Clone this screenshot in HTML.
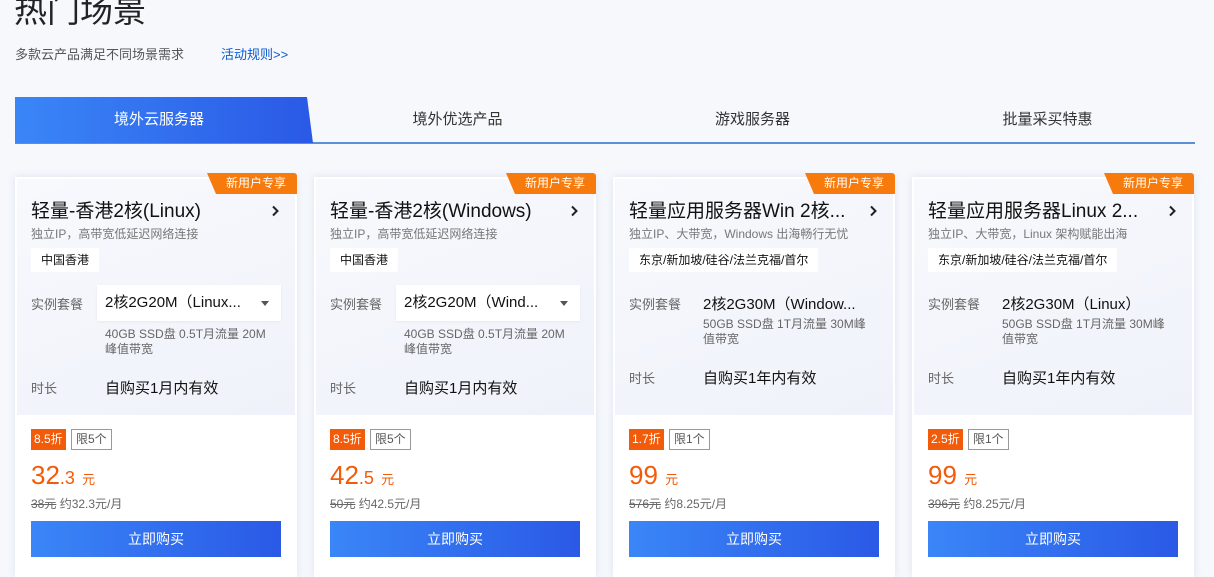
<!DOCTYPE html>
<html><head><meta charset="utf-8"><style>
*{margin:0;padding:0;box-sizing:border-box}
body{width:1214px;height:569px;overflow:hidden;background:#f6f8fc;font-family:"Liberation Sans","Noto Sans CJK SC",sans-serif;position:relative;color:#222}
.abs{position:absolute}
.h1{left:14px;top:-11px;font-size:33px;color:#222;line-height:44px}
.sub{left:15px;top:44px;font-size:13px;color:#555}
.link{left:221px;top:44px;font-size:13px;color:#0a5bd1}
.tabline{left:15px;top:142px;width:1180px;height:2px;background:#5b8fd6}
.tab1{left:15px;top:97px;width:298px;height:46px;background:linear-gradient(90deg,#3a86f7,#2a59e6);clip-path:polygon(0 0,292px 0,298px 46px,0 46px);color:#fff;font-size:15px;line-height:46px;text-align:center;padding-right:10px}
.tab{top:97px;height:46px;line-height:46px;font-size:15px;color:#333;width:295px;text-align:center}
.card{top:177px;width:282px;height:400px;background:#fff;box-shadow:0 0 8px rgba(180,190,215,.35)}
.top{position:absolute;left:0;top:0;width:282px;height:240px;background:linear-gradient(160deg,#f8f9fd 0%,#eff2fa 100%);border:2px solid #fff}
.new{position:absolute;right:0;top:-4px;width:90px;height:21px;background:#f77a0c;color:#fff;font-size:12px;line-height:21px;text-align:center;padding-left:8px;clip-path:polygon(0 0,100% 0,100% 100%,9px 100%);border-radius:0 3px 0 0}
.t{position:absolute;left:16px;top:19px;font-size:19px;color:#111;white-space:nowrap}
.arr{position:absolute;left:256px;top:28px}
.d{position:absolute;left:16px;top:48px;font-size:12px;color:#777;white-space:nowrap}
.reg{position:absolute;left:16px;top:71px;height:24px;background:#fff;font-size:12px;line-height:24px;padding:0 10px;color:#111}
.lb{position:absolute;left:16px;font-size:13px;color:#666}
.sel{position:absolute;left:82px;top:108px;width:184px;height:36px;background:#fff;font-size:15px;line-height:36px;padding-left:8px;color:#111;box-shadow:0 1px 3px rgba(0,0,0,.05)}
.sel:after{content:"";position:absolute;right:12px;top:16px;border:4px solid transparent;border-top:5px solid #555}
.v{position:absolute;left:90px;font-size:15px;color:#111;white-space:nowrap}
.sd{position:absolute;left:90px;font-size:12px;color:#666;line-height:15px;width:168px}
.b1{position:absolute;left:16px;top:252px;height:21px;background:#f25b0a;color:#fff;font-size:12px;line-height:21px;padding:0 3px}
.b2{position:absolute;top:252px;height:21px;border:1px solid #999;color:#555;font-size:12px;line-height:19px;padding:0 4px;background:#fff}
.p{position:absolute;left:16px;top:283px;color:#f25b0a;font-size:26px;white-space:nowrap}
.p small{font-size:18px}.p i{font-style:normal;font-size:13px}
.o{position:absolute;left:16px;top:318px;font-size:12px;color:#666}
.btn{position:absolute;left:16px;top:344px;width:250px;height:36px;background:linear-gradient(90deg,#3a86f7,#2a59e6);color:#fff;font-size:14px;line-height:36px;text-align:center}
</style></head><body>
<div class="abs h1">热门场景</div>
<div class="abs sub">多款云产品满足不同场景需求</div>
<div class="abs link">活动规则&gt;&gt;</div>
<div class="abs tabline"></div>
<div class="abs tab1">境外云服务器</div>
<div class="abs tab" style="left:310px">境外优选产品</div>
<div class="abs tab" style="left:605px">游戏服务器</div>
<div class="abs tab" style="left:900px">批量采买特惠</div>

<div class="abs card" style="left:15px"><div class="top"></div><div class="new">新用户专享</div>
<div class="t">轻量-香港2核(Linux)</div><svg class="arr" width="8" height="12" viewBox="0 0 8 12"><path d="M2 1.5L6.5 6L2 10.5" fill="none" stroke="#222" stroke-width="2"/></svg>
<div class="d">独立IP，高带宽低延迟网络连接</div><div class="reg">中国香港</div>
<div class="lb" style="top:117px">实例套餐</div><div class="sel">2核2G20M（Linux...</div>
<div class="sd" style="top:150px">40GB SSD盘 0.5T月流量 20M峰值带宽</div>
<div class="lb" style="top:201px">时长</div><div class="v" style="top:200px">自购买1月内有效</div>
<div class="b1">8.5折</div><div class="b2" style="left:56px">限5个</div>
<div class="p">32<small>.3</small> <i>元</i></div><div class="o"><s>38元</s> 约32.3元/月</div>
<div class="btn">立即购买</div></div>

<div class="abs card" style="left:314px"><div class="top"></div><div class="new">新用户专享</div>
<div class="t">轻量-香港2核(Windows)</div><svg class="arr" width="8" height="12" viewBox="0 0 8 12"><path d="M2 1.5L6.5 6L2 10.5" fill="none" stroke="#222" stroke-width="2"/></svg>
<div class="d">独立IP，高带宽低延迟网络连接</div><div class="reg">中国香港</div>
<div class="lb" style="top:117px">实例套餐</div><div class="sel">2核2G20M（Wind...</div>
<div class="sd" style="top:150px">40GB SSD盘 0.5T月流量 20M峰值带宽</div>
<div class="lb" style="top:201px">时长</div><div class="v" style="top:200px">自购买1月内有效</div>
<div class="b1">8.5折</div><div class="b2" style="left:56px">限5个</div>
<div class="p">42<small>.5</small> <i>元</i></div><div class="o"><s>50元</s> 约42.5元/月</div>
<div class="btn">立即购买</div></div>

<div class="abs card" style="left:613px"><div class="top"></div><div class="new">新用户专享</div>
<div class="t">轻量应用服务器Win 2核...</div><svg class="arr" width="8" height="12" viewBox="0 0 8 12"><path d="M2 1.5L6.5 6L2 10.5" fill="none" stroke="#222" stroke-width="2"/></svg>
<div class="d">独立IP、大带宽，Windows 出海畅行无忧</div><div class="reg">东京/新加坡/硅谷/法兰克福/首尔</div>
<div class="lb" style="top:117px">实例套餐</div><div class="v" style="top:116px">2核2G30M（Window...</div>
<div class="sd" style="top:140px">50GB SSD盘 1T月流量 30M峰值带宽</div>
<div class="lb" style="top:191px">时长</div><div class="v" style="top:190px">自购买1年内有效</div>
<div class="b1">1.7折</div><div class="b2" style="left:56px">限1个</div>
<div class="p">99 <i>元</i></div><div class="o"><s>576元</s> 约8.25元/月</div>
<div class="btn">立即购买</div></div>

<div class="abs card" style="left:912px"><div class="top"></div><div class="new">新用户专享</div>
<div class="t">轻量应用服务器Linux 2...</div><svg class="arr" width="8" height="12" viewBox="0 0 8 12"><path d="M2 1.5L6.5 6L2 10.5" fill="none" stroke="#222" stroke-width="2"/></svg>
<div class="d">独立IP、大带宽，Linux 架构赋能出海</div><div class="reg">东京/新加坡/硅谷/法兰克福/首尔</div>
<div class="lb" style="top:117px">实例套餐</div><div class="v" style="top:116px">2核2G30M（Linux）</div>
<div class="sd" style="top:140px">50GB SSD盘 1T月流量 30M峰值带宽</div>
<div class="lb" style="top:191px">时长</div><div class="v" style="top:190px">自购买1年内有效</div>
<div class="b1">2.5折</div><div class="b2" style="left:56px">限1个</div>
<div class="p">99 <i>元</i></div><div class="o"><s>396元</s> 约8.25元/月</div>
<div class="btn">立即购买</div></div>
</body></html>
